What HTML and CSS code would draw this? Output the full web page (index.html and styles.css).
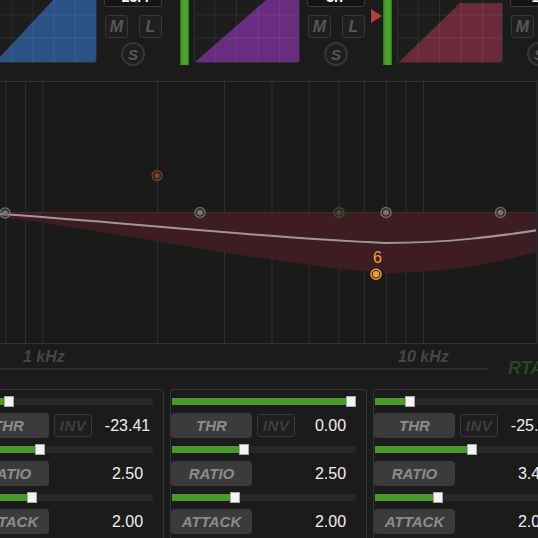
FILE: index.html
```html
<!DOCTYPE html>
<html>
<head>
<meta charset="utf-8">
<title>Multiband Dynamics</title>
<link rel="stylesheet" href="styles.css">
</head>
<body>
<div class="app">
  <div class="strips">
    <div class="strip">
      <div class="scope">
        <svg class="scope-svg" viewBox="0 0 104 62">
          <polygon points="3.4,62 61,0 104,0 104,62" class="fill-blue"/>
          <g class="scope-grid">
            <line x1="20" y1="0" x2="20" y2="62"/><line x1="41" y1="0" x2="41" y2="62"/>
            <line x1="62" y1="0" x2="62" y2="62"/><line x1="83" y1="0" x2="83" y2="62"/>
            <line x1="0" y1="15" x2="104" y2="15"/><line x1="0" y1="38" x2="104" y2="38"/>
          </g>
        </svg>
      </div>
      <div class="ctrl">
        <div class="readout">-23.4</div>
        <div class="ml"><span class="sq">M</span><span class="sq">L</span></div>
        <div class="solo">S</div>
      </div>
      <div class="marker off"></div>
      <div class="meter"></div>
    </div>
    <div class="strip">
      <div class="scope">
        <svg class="scope-svg" viewBox="0 0 104 62">
          <polygon points="0,62 71,0 104,0 104,62" class="fill-purple"/>
          <g class="scope-grid">
            <line x1="20" y1="0" x2="20" y2="62"/><line x1="41.5" y1="0" x2="41.5" y2="62"/>
            <line x1="63" y1="0" x2="63" y2="62"/><line x1="84.5" y1="0" x2="84.5" y2="62"/>
            <line x1="0" y1="15" x2="104" y2="15"/><line x1="0" y1="38" x2="104" y2="38"/>
          </g>
        </svg>
      </div>
      <div class="ctrl">
        <div class="readout">3.7</div>
        <div class="ml"><span class="sq">M</span><span class="sq">L</span></div>
        <div class="solo">S</div>
      </div>
      <div class="marker"></div>
      <div class="meter"></div>
    </div>
    <div class="strip">
      <div class="scope">
        <svg class="scope-svg" viewBox="0 0 104 62">
          <polygon points="1,62 62,3 104,3 104,62" class="fill-red"/>
          <g class="scope-grid">
            <line x1="20" y1="0" x2="20" y2="62"/><line x1="41.5" y1="0" x2="41.5" y2="62"/>
            <line x1="63" y1="0" x2="63" y2="62"/><line x1="84.5" y1="0" x2="84.5" y2="62"/>
            <line x1="0" y1="15" x2="104" y2="15"/><line x1="0" y1="38" x2="104" y2="38"/>
          </g>
        </svg>
      </div>
      <div class="ctrl">
        <div class="readout">-1.2</div>
        <div class="ml"><span class="sq">M</span><span class="sq">L</span></div>
        <div class="solo">S</div>
      </div>
      <div class="marker off"></div>
      <div class="meter"></div>
    </div>
  </div>

  <div class="graph">
    <svg class="graph-svg" viewBox="-9 82 545 261">
      <g class="vgrid">
        <line x1="6" y1="82" x2="6" y2="343"/>
        <line x1="25.5" y1="82" x2="25.5" y2="343"/>
        <line x1="43" y1="82" x2="43" y2="343"/>
        <line x1="157.5" y1="82" x2="157.5" y2="343"/>
        <line x1="224.5" y1="82" x2="224.5" y2="343"/>
        <line x1="272" y1="82" x2="272" y2="343"/>
        <line x1="309" y1="82" x2="309" y2="343"/>
        <line x1="339" y1="82" x2="339" y2="343"/>
        <line x1="364.5" y1="82" x2="364.5" y2="343"/>
        <line x1="386.5" y1="82" x2="386.5" y2="343"/>
        <line x1="406" y1="82" x2="406" y2="343"/>
        <line x1="423.5" y1="82" x2="423.5" y2="343"/>
      </g>
      <path class="band" d="M-9 212 L545 212 L545 250 C500 262 450 273 385 273 C250 262 100 228 -9 216 Z"/>
      <line class="band-top" x1="-9" y1="212.5" x2="545" y2="212.5"/>
      <path class="curve" d="M-9 213.5 C100 220 250 237 385 243 C450 243 500 236 545 229"/>
      <g class="node gray"><circle cx="5" cy="213" r="5"/><circle class="dot" cx="5" cy="213" r="2.3"/></g>
      <g class="node gray"><circle cx="200" cy="212.5" r="5"/><circle class="dot" cx="200" cy="212.5" r="2.3"/></g>
      <g class="node gray"><circle cx="386" cy="212.5" r="5"/><circle class="dot" cx="386" cy="212.5" r="2.3"/></g>
      <g class="node gray"><circle cx="500.5" cy="212.5" r="5"/><circle class="dot" cx="500.5" cy="212.5" r="2.3"/></g>
      <g class="node rust"><circle cx="157" cy="175.5" r="4.8"/><circle class="dot" cx="157" cy="175.5" r="2"/></g>
      <g class="node olive"><circle cx="339" cy="212.5" r="4.8"/><circle class="dot" cx="339" cy="212.5" r="2"/></g>
      <g class="node orange"><circle cx="376" cy="274.3" r="5"/><circle class="dot" cx="376" cy="274.3" r="2.5"/></g>
      <text class="node-label" x="377.5" y="263" text-anchor="middle">6</text>
    </svg>
  </div>

  <div class="axis">
    <div class="freq">
      <div class="labels">
        <span class="lbl l1k">1 kHz</span>
        <span class="lbl l10k">10 kHz</span>
      </div>
      <div class="rule"></div>
    </div>
    <div class="rta">RTA</div>
  </div>

  <div class="panels">
    <div class="panel">
      <div class="slider"><div class="fill" style="width:35px"></div><div class="knob" style="left:35px"></div></div>
      <div class="row"><div class="btn">THR</div><div class="inv">INV</div><div class="val">-23.41</div></div>
      <div class="slider"><div class="fill" style="width:66px"></div><div class="knob" style="left:66px"></div></div>
      <div class="row"><div class="btn">RATIO</div><div class="val">2.50</div></div>
      <div class="slider"><div class="fill" style="width:58px"></div><div class="knob" style="left:58px"></div></div>
      <div class="row"><div class="btn">ATTACK</div><div class="val">2.00</div></div>
    </div>
    <div class="panel">
      <div class="slider"><div class="fill" style="width:174px"></div><div class="knob" style="left:174px"></div></div>
      <div class="row"><div class="btn">THR</div><div class="inv">INV</div><div class="val">0.00</div></div>
      <div class="slider"><div class="fill" style="width:67px"></div><div class="knob" style="left:67px"></div></div>
      <div class="row"><div class="btn">RATIO</div><div class="val">2.50</div></div>
      <div class="slider"><div class="fill" style="width:58px"></div><div class="knob" style="left:58px"></div></div>
      <div class="row"><div class="btn">ATTACK</div><div class="val">2.00</div></div>
    </div>
    <div class="panel">
      <div class="slider"><div class="fill" style="width:30px"></div><div class="knob" style="left:30px"></div></div>
      <div class="row"><div class="btn">THR</div><div class="inv">INV</div><div class="val">-25.80</div></div>
      <div class="slider"><div class="fill" style="width:92px"></div><div class="knob" style="left:92px"></div></div>
      <div class="row"><div class="btn">RATIO</div><div class="val">3.40</div></div>
      <div class="slider"><div class="fill" style="width:58px"></div><div class="knob" style="left:58px"></div></div>
      <div class="row"><div class="btn">ATTACK</div><div class="val">2.00</div></div>
    </div>
  </div>
</div>
</body>
</html>
```

FILE: styles.css
```css
html, body {
  margin: 0;
  padding: 0;
  background: #1b1b1b;
  width: 538px;
  height: 538px;
  overflow: hidden;
  font-family: "Liberation Sans", Arial, sans-serif;
}

.app {
  width: 538px;
  height: 538px;
  overflow: hidden;
}

/* ---------- channel strips ---------- */
.strips {
  display: flex;
  height: 81px;
  margin-left: -9px;
}

.strip {
  display: flex;
  align-items: flex-start;
  flex: none;
  width: 203px;
}

.scope {
  flex: none;
  width: 106px;
  height: 63px;
  box-sizing: border-box;
  border: 1px solid #2e2e2e;
  border-top: 0;
  border-radius: 0 0 3px 3px;
  background: #1d1d1d;
  overflow: hidden;
}

.scope-svg {
  display: block;
  width: 104px;
  height: 62px;
}

.fill-blue { fill: #2a5284; }
.fill-purple { fill: #692c81; }
.fill-red { fill: #6b2a3a; }

.scope-grid line {
  stroke: rgba(255, 255, 255, 0.07);
  stroke-width: 1;
}

.ctrl {
  flex: none;
  width: 58px;
  margin-left: 7px;
  display: flex;
  flex-direction: column;
}

.readout {
  height: 22px;
  margin-top: -15px;
  box-sizing: border-box;
  padding-top: 3px;
  border: 1px solid #3a3a3a;
  border-radius: 3px;
  background: #141414;
  color: #ffffff;
  font-weight: bold;
  font-size: 14px;
  line-height: 17px;
  text-align: center;
}

.ml {
  display: flex;
  justify-content: space-between;
  margin-top: 8px;
  padding-left: 1px;
}

.sq {
  width: 23px;
  height: 23px;
  box-sizing: border-box;
  border: 1px solid #373737;
  border-radius: 3px;
  background: #1f1f1f;
  color: #575757;
  font-weight: bold;
  font-style: italic;
  font-size: 16px;
  display: flex;
  align-items: center;
  justify-content: center;
}

.solo {
  width: 24px;
  height: 24px;
  box-sizing: border-box;
  margin: 4px auto 0;
  border: 2px solid #363636;
  border-radius: 50%;
  background: #1f1f1f;
  color: #575757;
  font-weight: bold;
  font-style: italic;
  font-size: 15px;
  display: flex;
  align-items: center;
  justify-content: center;
}

.marker {
  flex: none;
  width: 0;
  height: 0;
  margin-left: 6px;
  margin-top: 9px;
  border-top: 7px solid transparent;
  border-bottom: 7px solid transparent;
  border-left: 11px solid #b43f3a;
}

.marker.off {
  visibility: hidden;
}

.meter {
  flex: none;
  width: 9px;
  height: 65px;
  margin-left: 1px;
  background: linear-gradient(90deg, #2d6a1c 0%, #4b9e2b 22%, #4fa52e 78%, #2d6a1c 100%);
}

/* ---------- graph ---------- */
.graph {
  width: 547px;
  height: 263px;
  margin-left: -10px;
  box-sizing: border-box;
  border: 1px solid #323232;
  background: #1a1a1a;
}

.graph-svg {
  display: block;
  width: 545px;
  height: 261px;
}

.vgrid line {
  stroke: #2f2f2f;
  stroke-width: 1;
}

.band {
  fill: #3c1d24;
}

.band-top {
  stroke: #47272e;
  stroke-width: 1;
}

.curve {
  fill: none;
  stroke: #a0969a;
  stroke-width: 2;
}

.node circle {
  fill: none;
  stroke-width: 1.5;
}

.node .dot {
  stroke: none;
}

.node.gray circle { stroke: #6c6c6c; }
.node.gray .dot { fill: #7c7c7c; }
.node.rust circle { stroke: #74442a; }
.node.rust .dot { fill: #b4392c; }
.node.olive circle { stroke: #3d4a2c; }
.node.olive .dot { fill: #a0302c; }
.node.orange circle { stroke: #f3a02e; }
.node.orange .dot { fill: #f3a02e; }

.node-label {
  fill: #f3a02e;
  font-family: "Liberation Sans", Arial, sans-serif;
  font-size: 16px;
}

/* ---------- frequency axis ---------- */
.axis {
  display: flex;
  height: 45px;
}

.freq {
  flex: none;
  width: 488px;
}

.labels {
  position: relative;
  height: 24px;
}

.lbl {
  position: absolute;
  top: 4px;
  color: #464646;
  font-weight: bold;
  font-style: italic;
  font-size: 16px;
  line-height: 18px;
}

.l1k { left: 23px; }
.l10k { left: 398px; }

.rule {
  height: 2px;
  background: #2d2d2d;
}

.rta {
  margin-left: 20px;
  margin-top: 13px;
  color: #2a4425;
  font-weight: bold;
  font-style: italic;
  font-size: 18px;
  line-height: 22px;
}

/* ---------- band panels ---------- */
.panels {
  display: flex;
  gap: 6px;
  margin-left: -33px;
}

.panel {
  flex: none;
  width: 197px;
  height: 200px;
  box-sizing: border-box;
  border: 1px solid #353535;
  border-bottom: 0;
  border-radius: 4px 4px 0 0;
  padding-top: 8px;
}

.slider {
  position: relative;
  width: 184px;
  height: 7px;
  margin-left: 1px;
  background: #272727;
}

.fill {
  height: 100%;
  background: #4a9a2b;
}

.knob {
  position: absolute;
  top: -2px;
  width: 10px;
  height: 11px;
  box-sizing: border-box;
  background: #f3f3f3;
  border: 1px solid #a8a8a8;
}

.row {
  display: flex;
  align-items: center;
  height: 25px;
  margin: 8px 0;
}

.btn {
  flex: none;
  width: 81px;
  height: 25px;
  border-radius: 4px;
  background: #3b3b3b;
  color: #8c8c8c;
  font-weight: bold;
  font-style: italic;
  font-size: 15px;
  display: flex;
  align-items: center;
  justify-content: center;
}

.inv {
  flex: none;
  width: 38px;
  height: 23px;
  margin-left: 5px;
  box-sizing: border-box;
  border: 1px solid #383838;
  border-radius: 3px;
  background: #1e1e1e;
  color: #3f3f3f;
  font-weight: bold;
  font-style: italic;
  font-size: 15px;
  letter-spacing: 0.5px;
  display: flex;
  align-items: center;
  justify-content: center;
}

.val {
  flex: 1;
  margin-left: 43px;
  text-align: center;
  color: #f0f0f0;
  font-size: 16px;
}

.inv + .val {
  margin-left: 0;
}
```
